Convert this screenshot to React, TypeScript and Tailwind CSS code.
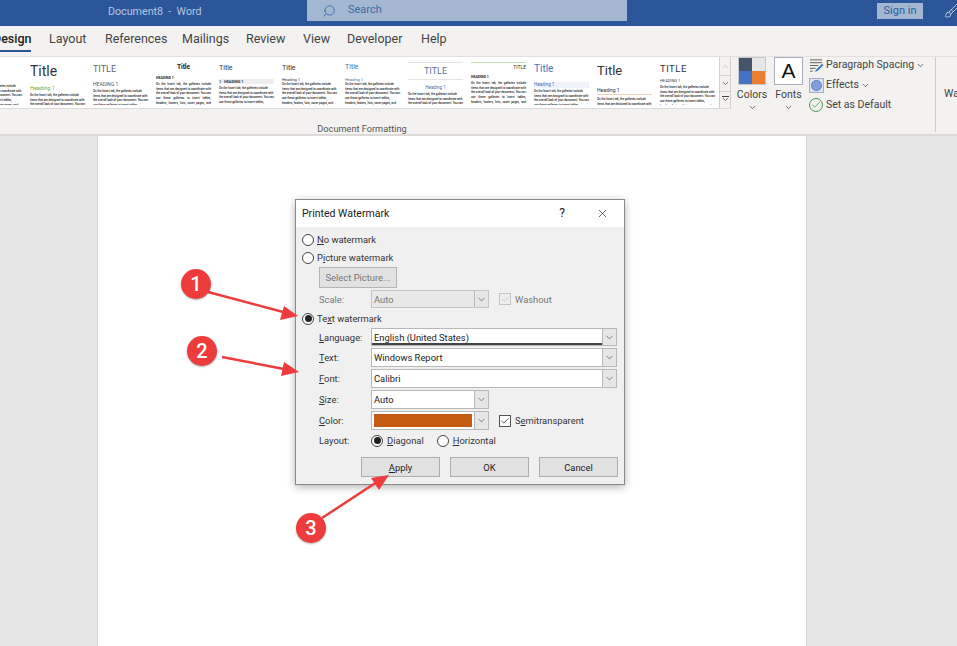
// App.tsx
import { ChevronDown, ChevronUp, Search, X, Brush, Check } from 'lucide-react';

const BODY =
  'On the Insert tab, the galleries include items that are designed to coordinate with the overall look of your document. You can use these galleries to insert tables, headers, footers, lists, cover pages, and other document building blocks.';

const thumbs = [
  { title: '', titleCls: 'h-[27px]', heading: '', headCls: '', bodyCls: 'mt-[0px]' },
  { title: 'Title', titleCls: 'text-[14px] leading-[20px] text-[#333] mt-[4px]', heading: 'Heading 1', headCls: 'text-[5.5px] leading-[8px] text-[#70ad47] mt-[3px]', bodyCls: 'mt-[1px]' },
  { title: 'TITLE', titleCls: 'text-[9px] leading-[12px] text-[#666] mt-[6px]', heading: 'HEADING 1', headCls: 'text-[5px] leading-[7px] text-[#555] mt-[6px]', bodyCls: 'mt-[1px]' },
  { title: 'Title', titleCls: 'text-[6.5px] leading-[8px] font-bold text-[#222] text-center mt-[6px]', heading: 'HEADING 1', headCls: 'text-[3.5px] leading-[5px] font-bold text-[#222] mt-[5px]', bodyCls: 'mt-[1px] text-justify' },
  { title: 'Title', titleCls: 'text-[7px] leading-[10px] text-[#333] mt-[6px]', heading: '1   HEADING 1', headCls: 'text-[3.8px] leading-[5px] font-bold text-[#333] bg-[#eeeeee] mt-[6px] whitespace-pre', bodyCls: 'mt-[2px]' },
  { title: 'Title', titleCls: 'text-[7px] leading-[10px] text-[#333] mt-[6px]', heading: 'Heading 1', headCls: 'text-[4px] leading-[5px] text-[#333] mt-[4px]', bodyCls: 'mt-[0px]' },
  { title: 'Title', titleCls: 'text-[7px] leading-[10px] text-[#4a6aa5] mt-[5px]', heading: 'Heading 1', headCls: 'text-[4px] leading-[5px] text-[#4a6aa5] mt-[5px]', bodyCls: 'mt-[0px]' },
  { title: 'TITLE', titleCls: 'text-[9px] leading-[14px] text-[#5b7290] text-center border-y border-[#e4e4e4] mt-[5px] py-[1px]', heading: 'Heading 1', headCls: 'text-[4.5px] leading-[6px] text-[#4a6aa5] text-center mt-[5px]', bodyCls: 'mt-[1px]' },
  { title: 'TITLE', titleCls: 'text-[5px] leading-[8px] text-[#333] text-right border-t border-[#c5e0b4] mt-[5px]', heading: 'HEADING 1', headCls: 'text-[3.5px] leading-[5px] font-bold text-[#222] mt-[4px]', bodyCls: 'mt-[1px] text-justify' },
  { title: 'Title', titleCls: 'text-[10px] leading-[14px] text-[#4472c4] mt-[5px]', heading: 'Heading 1', headCls: 'text-[4.5px] leading-[6px] text-[#4472c4] bg-[#eef2f9] mt-[6px]', bodyCls: 'mt-[1px]' },
  { title: 'Title', titleCls: 'text-[13px] leading-[18px] text-[#333] mt-[5px]', heading: 'Heading 1', headCls: 'text-[5px] leading-[7px] text-[#333] border-b border-[#f4cfb5] mt-[7px]', bodyCls: 'mt-[2px]' },
  { title: 'TITLE', titleCls: 'text-[9.5px] leading-[13px] tracking-[0.5px] text-[#333] mt-[5px]', heading: 'HEADING 1', headCls: 'text-[4px] leading-[6px] text-[#444] mt-[3px]', bodyCls: 'mt-[1px]' },
];

function Thumb({ t }: { t: (typeof thumbs)[number] }) {
  return (
    <div className="w-[63px] h-[48px] shrink-0 overflow-hidden px-[4px]">
      <div className={t.titleCls}>{t.title}</div>
      {t.heading && <div className={t.headCls}>{t.heading}</div>}
      <p className={`text-[2.9px] leading-[4.7px] font-medium text-[#222] ${t.bodyCls}`}>{BODY}</p>
    </div>
  );
}

function Radio({ on, dim }: { on?: boolean; dim?: boolean }) {
  return (
    <span className={`w-[12px] h-[12px] shrink-0 rounded-full border bg-white flex items-center justify-center ${dim ? 'border-[#999]' : 'border-[#444]'}`}>
      {on && <span className="w-[7px] h-[7px] rounded-full bg-[#222]" />}
    </span>
  );
}

function Field({ width, h, value, disabled, children, line }: { width: string; h: string; value?: string; disabled?: boolean; children?: React.ReactNode; line?: boolean }) {
  return (
    <div className={`${width} ${h} flex border ${disabled ? 'border-[#c4c4c4] bg-[#e8e8e8]' : 'border-[#b8b8b8] bg-white'}`}>
      <div className={`flex-1 pl-[2px] flex items-center min-w-0 relative ${disabled ? 'text-[#777]' : 'text-[#222]'}`}>
        {children ?? value}
        {line && <span className="absolute left-0 right-0 bottom-0 h-[2px] bg-[#444]" />}
      </div>
      <div className="w-[14px] border-l border-[#b8b8b8] bg-[#e6e6e6] flex items-center justify-center">
        <ChevronDown className="w-[11px] h-[11px] text-[#555]" strokeWidth={1.5} />
      </div>
    </div>
  );
}

function Row({ label, className, children }: { label: React.ReactNode; className: string; children: React.ReactNode }) {
  return (
    <div className={`flex items-center pl-[23px] ${className}`}>
      <span className="w-[52px] shrink-0">{label}</span>
      {children}
    </div>
  );
}

function Btn({ label, className }: { label: React.ReactNode; className: string }) {
  return (
    <div className={`h-[20px] bg-[#e1e1e1] border border-[#adadad] flex items-center justify-center text-[#222] ${className}`}>{label}</div>
  );
}

function Badge({ n, className }: { n: string; className: string }) {
  return (
    <span className={`absolute w-[30px] h-[30px] rounded-full bg-[#ee3b3b] text-white text-[20px] font-medium flex items-center justify-center shadow-[0_1px_2px_rgba(0,0,0,0.3)] ${className}`}>
      {n}
    </span>
  );
}

export default function App() {
  return (
    <div className="relative w-[957px] h-[646px] overflow-hidden flex flex-col bg-[#e6e6e6] font-['Roboto',sans-serif]">
      {/* title bar */}
      <div className="h-[26px] shrink-0 bg-[#2b579a] flex items-start text-[#b4c6e0]">
        <span className="ml-[108px] mt-[4px] text-[10.7px] leading-[15px] w-[199px] shrink-0 whitespace-pre">Document8  -  Word</span>
        <div className="w-[320px] h-[21px] shrink-0 bg-[#a3b7d2] flex items-center text-[#3c6aa8] text-[11px]">
          <Search className="w-[14px] h-[14px] ml-[15px] -scale-x-100" strokeWidth={1.5} />
          <span className="ml-[12px]">Search</span>
        </div>
        <div className="ml-[250px] mt-[3px] w-[46px] h-[16px] shrink-0 bg-[#a3b7d2] text-[#2b5f9e] text-[11px] flex items-center justify-center">Sign in</div>
        <Brush className="ml-[21px] mt-[3px] w-[16px] h-[16px] shrink-0 text-[#c9d6e8]" strokeWidth={1.25} />
      </div>

      {/* tabs */}
      <div className="h-[31px] shrink-0 bg-[#f3f2f1] flex items-start text-[12.5px] leading-[26px] text-[#444] border-b border-[#e3e1df]">
        <div className="-ml-[7px] w-[38px] h-[26px] border-b-2 border-[#2b579a] text-[#222] text-right font-medium shrink-0">Design</div>
        <span className="ml-[18px] w-[56px] shrink-0">Layout</span>
        <span className="w-[77px] shrink-0">References</span>
        <span className="w-[64px] shrink-0">Mailings</span>
        <span className="w-[57px] shrink-0">Review</span>
        <span className="w-[44px] shrink-0">View</span>
        <span className="w-[74px] shrink-0">Developer</span>
        <span>Help</span>
      </div>

      {/* ribbon */}
      <div className="h-[79px] shrink-0 bg-[#f3f2f1] flex items-start border-b-2 border-[#dcdad8] text-[#444] overflow-hidden">
        <div className="w-[731px] shrink-0 flex flex-col">
          <div className="h-[52px] flex border-b border-[#dcdad8] bg-white">
            <div className="w-[756px] overflow-hidden flex -ml-[37px] shrink-0">
              {thumbs.map((t, i) => (
                <Thumb key={i} t={t} />
              ))}
            </div>
            <div className="w-[12px] shrink-0 flex flex-col border-x border-[#d2d0ce] bg-[#f3f2f1]">
              <div className="h-[18px] flex items-center justify-center">
                <ChevronUp className="w-[9px] h-[9px] text-[#bbb]" />
              </div>
              <div className="h-[17px] border-y border-[#d2d0ce] flex items-center justify-center">
                <ChevronDown className="w-[9px] h-[9px] text-[#444]" />
              </div>
              <div className="flex-1 flex flex-col items-center justify-center">
                <span className="w-[7px] h-px bg-[#444] mb-[-2px]" />
                <ChevronDown className="w-[9px] h-[9px] text-[#444]" />
              </div>
            </div>
          </div>
          <div className="mt-[13px] w-[724px] text-center text-[9.2px] leading-[13px] text-[#555]">Document Formatting</div>
        </div>
        <div className="ml-[7px] w-[28px] shrink-0 flex flex-col items-center">
          <div className="w-[28px] h-[28px] grid grid-cols-2 grid-rows-2 border border-[#c8c8c8]">
            <span className="bg-[#44546a]" />
            <span className="bg-[#e7e6e6]" />
            <span className="bg-[#4472c4]" />
            <span className="bg-[#ed7d31]" />
          </div>
          <span className="mt-[2px] text-[10.5px] leading-[15px] whitespace-nowrap">Colors</span>
          <ChevronDown className="mt-[1px] w-[9px] h-[9px]" />
        </div>
        <div className="ml-[8px] w-[29px] shrink-0 flex flex-col items-center">
          <div className="w-[29px] h-[28px] bg-white border border-[#a9aebf] flex items-center justify-center font-['Liberation_Sans',sans-serif] text-[21px] text-[#111]">A</div>
          <span className="mt-[2px] text-[10.5px] leading-[15px]">Fonts</span>
          <ChevronDown className="mt-[1px] w-[9px] h-[9px]" />
        </div>
        <div className="ml-[6px] w-[126px] shrink-0 mt-[-2px] flex flex-col text-[10.5px] leading-[20px]">
          <div className="h-[20px] flex items-center whitespace-nowrap">
            <svg viewBox="0 0 16 16" className="w-[15px] h-[15px] mr-[2px] shrink-0" fill="none">
              <path d="M1 2h13M1 5h13M1 8h9M1 11h6M1 14h3" stroke="#555" strokeWidth="1" />
              <path d="M6 15l2-3 6-6 1.5 1.5-6 6z" fill="#3e7cc4" />
            </svg>
            Paragraph Spacing
            <ChevronDown className="ml-[2px] w-[9px] h-[9px]" />
          </div>
          <div className="h-[20px] flex items-center">
            <span className="w-[15px] h-[15px] mr-[2px] shrink-0 border border-[#a9aebf] bg-[#dbe3f2] flex items-center justify-center">
              <span className="w-[11px] h-[11px] rounded-full bg-[#7f9fdc] border border-[#5b7fc2]" />
            </span>
            Effects
            <ChevronDown className="ml-[2px] w-[9px] h-[9px]" />
          </div>
          <div className="h-[20px] flex items-center">
            <span className="w-[14px] h-[14px] mr-[3px] shrink-0 rounded-full border border-[#3f9e4d] flex items-center justify-center">
              <Check className="w-[10px] h-[10px] text-[#3f9e4d]" strokeWidth={2} />
            </span>
            Set as Default
          </div>
        </div>
        <div className="w-px h-[76px] mt-[-1px] bg-[#cfcdcb] shrink-0" />
        <span className="ml-[8px] mt-[29px] text-[10.5px] leading-[15px] whitespace-nowrap">Watermark</span>
      </div>

      {/* document canvas */}
      <div className="flex-1 min-h-0 pl-[97px]">
        <div className="w-[710px] h-full bg-white border-x border-[#d4d4d4]" />
      </div>

      {/* dialog */}
      <div className="absolute left-[295px] top-[199px] w-[330px] h-[286px] bg-[#f0f0f0] border border-[#8a8a8a] shadow-[0_2px_8px_rgba(0,0,0,0.3)] text-[9.4px] leading-[13px] text-[#333] flex flex-col">
        <div className="h-[27px] bg-white shrink-0 flex items-center pl-[6px] text-[10.5px] text-[#222]">
          <span className="flex-1">Printed Watermark</span>
          <span className="text-[12px] mr-[31px]">?</span>
          <X className="w-[13px] h-[13px] mr-[15px]" strokeWidth={1.25} />
        </div>
        <div className="flex items-center pl-[6px] mt-[6px] h-[13px] gap-[3px]">
          <Radio />
          <span><u>N</u>o watermark</span>
        </div>
        <div className="flex items-center pl-[6px] mt-[5px] h-[13px] gap-[3px]">
          <Radio />
          <span>P<u>i</u>cture watermark</span>
        </div>
        <div className="ml-[23px] mt-[3px] w-[78px] h-[21px] bg-[#e1e1e1] border border-[#b4b4b4] text-[#777] flex items-center justify-center">Select Picture...</div>
        <Row label="Scale:" className="mt-[2px] text-[#777]">
          <Field width="w-[118px]" h="h-[18px]" value="Auto" disabled />
          <span className="ml-[10px] w-[12px] h-[12px] border border-[#c4c4c4] bg-[#eee] flex items-center justify-center">
            <Check className="w-[9px] h-[9px] text-[#aaa]" strokeWidth={1.5} />
          </span>
          <span className="ml-[4px]">Washout</span>
        </Row>
        <div className="flex items-center pl-[6px] mt-[4px] h-[13px] gap-[3px]">
          <Radio on />
          <span>Te<u>x</u>t watermark</span>
        </div>
        <Row label={<><u>L</u>anguage:</>} className="mt-[3px]">
          <Field width="w-[246px]" h="h-[18px]" value="English (United States)" line />
        </Row>
        <Row label={<><u>T</u>ext:</>} className="mt-[2px]">
          <Field width="w-[246px]" h="h-[19px]" value="Windows Report" />
        </Row>
        <Row label={<><u>F</u>ont:</>} className="mt-[2px]">
          <Field width="w-[246px]" h="h-[19px]" value="Calibri" />
        </Row>
        <Row label={<><u>S</u>ize:</>} className="mt-[2px]">
          <Field width="w-[118px]" h="h-[19px]" value="Auto" />
        </Row>
        <Row label={<><u>C</u>olor:</>} className="mt-[2px]">
          <Field width="w-[118px]" h="h-[19px]">
            <span className="block w-[98px] h-[13px] bg-[#c55a11]" />
          </Field>
          <span className="ml-[10px] w-[12px] h-[12px] border border-[#555] bg-white flex items-center justify-center">
            <Check className="w-[10px] h-[10px] text-[#222]" strokeWidth={1.75} />
          </span>
          <span className="ml-[4px]">S<u>e</u>mitransparent</span>
        </Row>
        <Row label="Layout:" className="mt-[4px]">
          <Radio on />
          <span className="ml-[4px]"><u>D</u>iagonal</span>
          <span className="ml-[13px]"><Radio /></span>
          <span className="ml-[4px]"><u>H</u>orizontal</span>
        </Row>
        <div className="flex pl-[65px] mt-[10px]">
          <Btn label={<><u>A</u>pply</>} className="w-[79px]" />
          <Btn label="OK" className="w-[79px] ml-[10px]" />
          <Btn label="Cancel" className="w-[79px] ml-[10px]" />
        </div>
      </div>

      {/* annotations */}
      <svg className="absolute left-0 top-0 w-[957px] h-[646px] pointer-events-none" viewBox="0 0 957 646" fill="none">
        <g stroke="#ee3b3b" strokeWidth="2.5">
          <path d="M208 292L287 313" />
          <path d="M222 357L289 370" />
          <path d="M322 518L380 480" />
        </g>
        <g fill="#ee3b3b">
          <path d="M298 316L280 320L284 306z" />
          <path d="M299 372L281 376L284 362z" />
          <path d="M389 475L379 490L371 478z" />
        </g>
      </svg>
      <Badge n="1" className="left-[181px] top-[269px]" />
      <Badge n="2" className="left-[187px] top-[336px]" />
      <Badge n="3" className="left-[296px] top-[513px]" />
    </div>
  );
}
